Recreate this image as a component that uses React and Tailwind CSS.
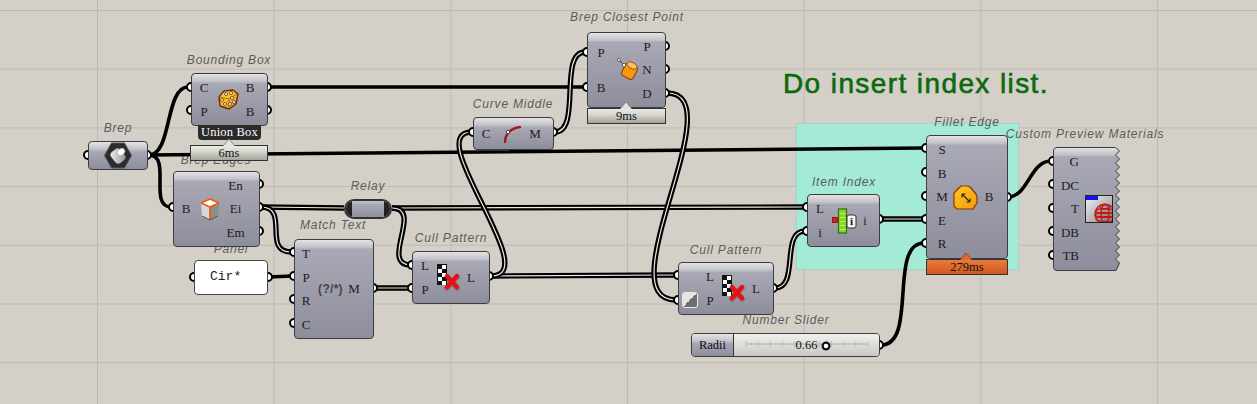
const SERIF = "font-['Liberation_Serif',serif]";
const NODE_BG =
  "bg-[linear-gradient(#e4e4e6_0,#bdbdc4_8px,#a9a8b5_9px,#8e8d9b_100%)]";
const BAR_BG = "bg-[linear-gradient(#eaeae6_0,#d6d6d0_40%,#a4a49a_100%)]";

const names = [
  ["left-[118px] top-[128px]", "Brep"],
  ["left-[229px] top-[60px]", "Bounding Box"],
  ["left-[216px] top-[160px]", "Brep Edges"],
  ["left-[368px] top-[186px]", "Relay"],
  ["left-[231px] top-[249px]", "Panel"],
  ["left-[333px] top-[225px]", "Match Text"],
  ["left-[451px] top-[238px]", "Cull Pattern"],
  ["left-[513px] top-[104px]", "Curve Middle"],
  ["left-[627px] top-[17px]", "Brep Closest Point"],
  ["left-[726px] top-[250px]", "Cull Pattern"],
  ["left-[786px] top-[320px]", "Number Slider"],
  ["left-[844px] top-[182px]", "Item Index"],
  ["left-[967px] top-[122px]", "Fillet Edge"],
  ["left-[1085px] top-[134px]", "Custom Preview Materials"],
];

// single wires
const wires = [
  "M149 155C172 155 165 87 188 87",
  "M149 155C172 155 148 207 171 207",
  "M149 155L924 148",
  "M270 87L585 87",
  "M270 277L291 276",
  "M881 345C918 345 888 243 924 243",
  "M1008 197C1028 197 1030 161 1051 161",
];

// list wires, drawn with a light core
const lists = [
  "M261 207L344 208",
  "M392 208L805 207",
  "M261 207C290 207 262 252 291 252",
  "M392 208C424 208 379 265 411 265",
  "M376 288L411 288",
  "M491 276L676 275",
  "M491 276C545 276 420 132 472 132",
  "M555 132C582 132 558 52 585 52",
  "M667 93C735 93 605 300 676 300",
  "M775 288C800 288 780 231 805 231",
  "M881 219L924 219",
];

const ports = [
  [88, 155], [147, 155],
  [191, 87], [191, 110], [267, 87], [267, 110],
  [173, 207], [259, 184], [259, 207], [259, 231],
  [194, 277], [268, 277],
  [294, 252], [294, 276], [294, 299], [294, 323], [373, 288],
  [412, 265], [412, 288], [489, 276],
  [473, 132], [553, 132],
  [587, 52], [587, 87], [665, 46], [665, 69], [665, 93],
  [678, 275], [678, 300], [773, 288],
  [879, 345],
  [807, 207], [807, 231], [879, 219],
  [926, 148], [926, 172], [926, 196], [926, 219], [926, 243], [1007, 197],
  [1053, 161], [1053, 184], [1053, 208], [1053, 231], [1053, 255],
];

const DiceIcon = () => (
  <svg width="21" height="21" viewBox="0 0 21 21" className="shrink-0">
    <defs>
      <linearGradient id="dice" x1="0" y1="0" x2="1" y2="1">
        <stop offset="0" stopColor="#ffe14a" />
        <stop offset="1" stopColor="#e88a08" />
      </linearGradient>
    </defs>
    <path d="M6 2L15 1L20 5L18 15L11 20L2 17L1 8Z" fill="url(#dice)" stroke="#6d2f08" strokeWidth="1.4" strokeLinejoin="round" />
    <path d="M2 8L11 10L19 5M11 10L11 19" fill="none" stroke="#c46a0a" strokeWidth="1" />
    {[[8, 5], [13, 4], [4, 11], [7, 15], [14, 9], [16, 13], [12, 15]].map(([x, y]) => (
      <circle key={`${x}-${y}`} cx={x} cy={y} r="1.5" fill="#fff" stroke="#5a3a10" strokeWidth="0.8" />
    ))}
  </svg>
);

const BrepIcon = () => (
  <svg width="28" height="27" viewBox="0 0 28 27" className="shrink-0">
    <defs>
      <linearGradient id="cyl" x1="0" y1="0" x2="1" y2="1">
        <stop offset="0" stopColor="#f4f4f4" />
        <stop offset="1" stopColor="#8a8a8a" />
      </linearGradient>
    </defs>
    <path d="M7.5 1H20.5L27.5 13.5L20.5 26H7.5L.5 13.5Z" fill="#2c2c2e" stroke="#555" strokeWidth="1" />
    <rect x="8" y="7" width="12" height="14" rx="4" transform="rotate(-38 14 14)" fill="url(#cyl)" />
    <ellipse cx="17.2" cy="10" rx="4" ry="3" transform="rotate(-38 17 10)" fill="#fff" stroke="#bbb" strokeWidth=".6" />
  </svg>
);

const CubeIcon = () => (
  <svg width="22" height="23" viewBox="0 0 22 23" className="shrink-0">
    <path d="M2 5L11 1L20 5L11 9Z" fill="#fff" />
    <path d="M2 5L11 9V22L3 18Z" fill="#d8d8d8" />
    <path d="M20 5L11 9V22L19 18Z" fill="#8e8e8e" />
    <path d="M2 5L11 9L20 5M11 9V22M2 5L11 1L20 5" fill="none" stroke="#ee5a08" strokeWidth="1.8" strokeLinejoin="round" />
    <path d="M3 18L11 22L19 18" fill="none" stroke="#555" strokeWidth="1" />
  </svg>
);

const CullIcon = () => (
  <svg width="24" height="27" viewBox="0 0 24 27" className="shrink-0">
    <rect x="0" y="0" width="10" height="21" fill="#111" />
    {[[5, 1], [1, 5], [5, 9], [1, 13], [5, 17]].map(([x, y]) => (
      <rect key={y} x={x} y={y} width="4" height="4" fill="#fff" />
    ))}
    <path d="M10 13L20 24M20 13L10 24" stroke="#7a1010" strokeWidth="5.5" strokeLinecap="round" opacity=".35" />
    <path d="M10 12L20 23M20 12L10 23" stroke="#e81010" strokeWidth="4.2" strokeLinecap="round" />
  </svg>
);

const ClosestIcon = () => (
  <svg width="22" height="24" viewBox="0 0 22 24" className="shrink-0">
    <path d="M2 2L7 7" stroke="#444" strokeWidth="1" />
    <rect x="6" y="6" width="13" height="14" rx="3" transform="rotate(28 12 13)" fill="#f8960e" stroke="#8a4206" strokeWidth="1" />
    <ellipse cx="15" cy="7.5" rx="5.5" ry="3" transform="rotate(28 15 7.5)" fill="#ffc062" stroke="#8a4206" strokeWidth=".8" />
    <circle cx="2" cy="2" r="1.5" fill="#fff" stroke="#444" strokeWidth=".8" />
    <circle cx="7" cy="7" r="1.7" fill="#fff" stroke="#444" strokeWidth=".8" />
  </svg>
);

const ArcIcon = () => (
  <svg width="18" height="18" viewBox="0 0 18 18" className="shrink-0">
    <path d="M2 17C2 9 8 3 17 2" fill="none" stroke="#a01a1e" strokeWidth="2.4" strokeLinecap="round" />
    <circle cx="5" cy="7" r="1.7" fill="#fff" stroke="#333" strokeWidth=".8" />
  </svg>
);

const IndexIcon = () => (
  <svg width="26" height="26" viewBox="0 0 26 26" className="shrink-0">
    <rect x="0.5" y="9.5" width="5" height="5" fill="#e01818" stroke="#7a1010" strokeWidth=".8" />
    <rect x="6.5" y="1" width="8" height="24" fill="#86d62a" stroke="#2f6e12" strokeWidth="1.2" />
    {[5, 9, 13, 17, 21].map((y) => (
      <rect key={y} x="7.5" y={y} width="6" height="1" fill="#b9ee5c" />
    ))}
    <rect x="15" y="7" width="9" height="13" rx="2" fill="#f2f2f2" stroke="#333" strokeWidth="1" />
    <text x="19.5" y="17" textAnchor="middle" fontSize="11" fontWeight="700" fontFamily="Liberation Serif" fill="#111">i</text>
  </svg>
);

const FilletIcon = () => (
  <svg width="25" height="25" viewBox="0 0 25 25" className="shrink-0">
    <defs>
      <linearGradient id="fil" x1="0" y1="0" x2="1" y2="1">
        <stop offset="0" stopColor="#ffcc1e" />
        <stop offset="1" stopColor="#f49a08" />
      </linearGradient>
    </defs>
    <path d="M8 1L14 1Q16 1 18 3L23 9Q24 11 24 13V18L20 24H4L1 21V8Z" fill="url(#fil)" stroke="#8a3208" strokeWidth="1.2" strokeLinejoin="round" />
    <path d="M9 9L17 17M9 9V12.5M9 9H12.5M17 17V13.5M17 17H13.5" fill="none" stroke="#222" strokeWidth="1.1" />
  </svg>
);

const PreviewIcon = () => (
  <svg width="28" height="28" viewBox="0 0 28 28" className="shrink-0">
    <defs>
      <linearGradient id="pv" x1="0" y1="0" x2="1" y2="1">
        <stop offset="0" stopColor="#f0f0f0" />
        <stop offset="1" stopColor="#8c8c8c" />
      </linearGradient>
      <clipPath id="pvc">
        <rect x="1" y="1" width="26" height="26" />
      </clipPath>
    </defs>
    <rect x=".5" y=".5" width="27" height="27" fill="url(#pv)" stroke="#222" />
    <rect x="1" y="1" width="12" height="4" fill="#1414f0" />
    <g clipPath="url(#pvc)" fill="none" stroke="#c01414" strokeWidth="1.2">
      <circle cx="20" cy="19" r="10" fill="#a83030" fillOpacity=".25" />
      <ellipse cx="20" cy="12" rx="5" ry="2" />
      <ellipse cx="20" cy="16" rx="9" ry="2.4" />
      <ellipse cx="20" cy="20" rx="10" ry="2.4" />
      <ellipse cx="20" cy="24" rx="9" ry="2.4" />
      <ellipse cx="20" cy="19" rx="4" ry="10" />
    </g>
  </svg>
);

const Column = ({ items, cls, row = "h-[23.5px]", text = "text-[13px]" }) => (
  <div className={`flex flex-col justify-center shrink-0 ${cls}`}>
    {items.map((t, i) => (
      <div key={i} className={`flex items-center ${row} ${text} ${SERIF} text-[#1c1c1c]`}>
        {t}
      </div>
    ))}
  </div>
);

const Node = ({ cls, children }) => (
  <div className={`absolute flex items-center rounded-[4px] border border-[#3b3b42] ${NODE_BG} ${cls}`}>
    {children}
  </div>
);

const Middle = ({ cls = "", children }) => (
  <div className={`flex-1 min-w-0 flex items-center justify-center ${cls}`}>{children}</div>
);

const Bar = ({ cls, text }) => (
  <div className={`absolute flex items-center justify-center border border-[#333] h-[16px] ${BAR_BG} ${SERIF} text-[12.5px] text-[#111] ${cls}`}>
    {text}
  </div>
);

const Pointer = ({ cls, fill = "#e2e2dc", stroke = "#777" }) => (
  <svg width="12" height="7" viewBox="0 0 12 7" className={`absolute ${cls}`}>
    <path d="M0 7L6 0L12 7" fill={fill} stroke={stroke} strokeWidth=".8" />
  </svg>
);

// right side of the Custom Preview component is a saw edge
const sawPath = () => {
  let d = "M4 .5H62.5L66.5 4";
  for (let y = 8; y < 120; y += 8) {
    d += `L62.5 ${y}L66.5 ${y + 4}`;
  }
  d += "L63 123.5H4Q.5 123.5 .5 120V4Q.5 .5 4 .5Z";
  return d;
};

const SliderTrack = () => (
  <svg width="146" height="22" viewBox="0 0 146 22" className="absolute left-0 top-0">
    <path d="M12 10H134" stroke="#aaa" strokeWidth="1" />
    {Array.from({ length: 11 }, (_, i) => (
      <path key={i} d={`M${12 + i * 12.2} 7V13`} stroke="#bbb" strokeWidth="1" />
    ))}
    <circle cx="92" cy="12" r="3.4" fill="#fff" stroke="#111" strokeWidth="2.2" />
  </svg>
);

export default function App() {
  return (
    <div className="relative w-[1257px] h-[404px] overflow-hidden bg-[#d4d0c8] bg-[linear-gradient(#bdbab2_1px,transparent_1px),linear-gradient(90deg,#bdbab2_1px,transparent_1px)] bg-[size:176.67px_58.7px] bg-[position:97px_10px]">
      <div className="absolute left-[796px] top-[123px] w-[223px] h-[147px] bg-[#a3ebd7] border border-[#9bd8c6]" />

      <div className="absolute left-[783px] top-[67px] text-[28px] leading-[34px] tracking-[1.4px] text-[#0b6a0b] font-['Liberation_Sans',sans-serif] [-webkit-text-stroke:0.6px_#0b6a0b] whitespace-nowrap">
        Do insert index list.
      </div>

      {names.map(([cls, text]) => (
        <div
          key={cls}
          className={`absolute -translate-x-1/2 -translate-y-1/2 whitespace-nowrap italic text-[12px] leading-[14px] tracking-[0.8px] text-[#5c5c5c] font-['Liberation_Sans',sans-serif] ${cls}`}
        >
          {text}
        </div>
      ))}

      <svg width="1257" height="404" viewBox="0 0 1257 404" fill="none" className="absolute left-0 top-0">
        {wires.map((d) => (
          <path key={d} d={d} stroke="#000" strokeWidth="3.6" strokeLinecap="round" />
        ))}
        {lists.map((d) => (
          <g key={d}>
            <path d={d} stroke="#000" strokeWidth="5.4" />
            <path d={d} stroke="#ecebe6" strokeWidth="1.2" />
          </g>
        ))}
        {ports.map(([x, y]) => (
          <circle key={`${x}-${y}`} cx={x} cy={y} r="4" fill="#fff" stroke="#000" strokeWidth="2" />
        ))}
      </svg>

      {/* Brep */}
      <Node cls="left-[88px] top-[141px] w-[60px] h-[29px] justify-center">
        <BrepIcon />
      </Node>

      {/* Bounding Box */}
      <Node cls="left-[191px] top-[73px] w-[77px] h-[53px]">
        <Column items={["C", "P"]} cls="w-[24px] items-center" />
        <Middle cls="pl-[7px]"><DiceIcon /></Middle>
        <Column items={["B", "B"]} cls="w-[34px] items-center" />
      </Node>
      <div className={`absolute left-[198px] top-[125px] w-[63px] h-[15px] flex items-center justify-center rounded-b-[4px] bg-[#2b2b2b] text-[12.5px] tracking-[0.2px] text-white ${SERIF}`}>
        Union Box
      </div>
      <Bar cls="left-[190px] top-[145px] w-[78px]" text="6ms" />
      <Pointer cls="left-[223px] top-[139px]" />

      {/* Brep Edges */}
      <Node cls="left-[173px] top-[171px] w-[87px] h-[76px]">
        <Column items={["B"]} cls="w-[24px] items-center" />
        <Middle cls="pl-[9px]"><CubeIcon /></Middle>
        <Column items={["En", "Ei", "Em"]} cls="w-[47px] items-center" />
      </Node>

      {/* Relay */}
      <div className="absolute left-[344px] top-[199px] w-[48px] h-[20px] flex rounded-full overflow-hidden border-2 border-[#333]">
        <div className="w-[6px] bg-[#222]" />
        <div className="flex-1 bg-[linear-gradient(#c4c4ca_0,#a9a8b5_4px,#8e8d9b_100%)]" />
        <div className="w-[6px] bg-[#222]" />
      </div>

      {/* Panel */}
      <div className="absolute left-[194px] top-[260px] w-[74px] h-[35px] rounded-[4px] border border-[#444] bg-white font-['Liberation_Mono',monospace] text-[13px] leading-[32px] pl-[15px] text-[#222]">
        Cir*
      </div>

      {/* Match Text */}
      <Node cls="left-[294px] top-[239px] w-[80px] h-[100px]">
        <Column items={["T", "P", "R", "C"]} cls="w-[22px] items-center" />
        <Middle cls="pl-[9px]">
          <span className="whitespace-nowrap font-['Liberation_Sans',sans-serif] font-bold text-[12px] tracking-[0.3px] text-[#444]">(?/*)</span>
        </Middle>
        <Column items={["M"]} cls="w-[38px] items-center" />
      </Node>

      {/* Cull Pattern */}
      <Node cls="left-[412px] top-[251px] w-[78px] h-[53px]">
        <Column items={["L", "P"]} cls="w-[24px] items-center" />
        <Middle cls="pl-[7px]"><CullIcon /></Middle>
        <Column items={["L"]} cls="w-[36px] items-center" />
      </Node>

      {/* Curve Middle */}
      <Node cls="left-[473px] top-[117px] w-[81px] h-[33px]">
        <Column items={["C"]} cls="w-[24px] items-center" />
        <Middle cls="pl-[8px]"><ArcIcon /></Middle>
        <Column items={["M"]} cls="w-[36px] items-center" />
      </Node>

      {/* Brep Closest Point */}
      <Node cls="left-[587px] top-[32px] w-[79px] h-[76px]">
        <Column items={["P", "B"]} row="h-[35px]" cls="w-[26px] items-center" />
        <Middle cls="pl-[12px]"><ClosestIcon /></Middle>
        <Column items={["P", "N", "D"]} cls="w-[36px] items-center" />
      </Node>
      <Bar cls="left-[587px] top-[108px] w-[79px]" text="9ms" />
      <Pointer cls="left-[620px] top-[102px]" />

      {/* Cull Pattern 2 */}
      <Node cls="left-[678px] top-[262px] w-[96px] h-[53px]">
        <Column items={["L", "P"]} cls="w-[44px] pl-[18px] items-center" />
        <Middle cls="pl-[5px]"><CullIcon /></Middle>
        <Column items={["L"]} cls="w-[34px] items-center" />
        <div className="absolute left-[3px] top-[29px] w-[16px] h-[16px] rounded-[3px] border border-[#e8e8e8] bg-[linear-gradient(135deg,#e4e4e4_50%,#6e6e6e_50%)]" />
      </Node>

      {/* Number Slider */}
      <div className="absolute left-[691px] top-[333px] w-[189px] h-[24px] flex rounded-[4px] border border-[#3b3b42] overflow-hidden">
        <div className={`w-[42px] flex items-center justify-center border-r border-[#333] ${NODE_BG} ${SERIF} text-[12.5px] text-[#111]`}>
          Radii
        </div>
        <div className={`relative flex-1 flex items-center justify-center bg-[linear-gradient(#f0f0ee,#c8c8c4)] ${SERIF} text-[12.5px] text-[#111]`}>
          <SliderTrack />
          <span className="relative">0.66</span>
        </div>
      </div>

      {/* Item Index */}
      <Node cls="left-[807px] top-[194px] w-[73px] h-[53px]">
        <Column items={["L", "i"]} cls="w-[24px] items-center" />
        <Middle cls="pl-[6px]"><IndexIcon /></Middle>
        <Column items={["i"]} cls="w-[28px] items-center" text="text-[12px]" />
      </Node>

      {/* Fillet Edge */}
      <Node cls="left-[926px] top-[135px] w-[82px] h-[124px]">
        <Column items={["S", "B", "M", "E", "R"]} cls="w-[30px] items-center" />
        <Middle cls="pl-[3px]"><FilletIcon /></Middle>
        <Column items={["B"]} cls="w-[36px] items-center" />
      </Node>
      <div className={`absolute left-[926px] top-[259px] w-[82px] h-[16px] flex items-center justify-center border border-[#333] bg-[linear-gradient(#e87c3c,#d2561e)] ${SERIF} text-[12.5px] text-[#111]`}>
        279ms
      </div>
      <Pointer cls="left-[960px] top-[253px]" fill="#e06a2c" stroke="#8a3a14" />

      {/* Custom Preview */}
      <div className="absolute left-[1053px] top-[147px] w-[68px] h-[124px] flex items-center">
        <svg width="68" height="124" viewBox="0 0 68 124" className="absolute left-0 top-0">
          <defs>
            <linearGradient id="cp" x1="0" y1="0" x2="0" y2="1">
              <stop offset="0" stopColor="#e4e4e6" />
              <stop offset=".065" stopColor="#bdbdc4" />
              <stop offset=".075" stopColor="#a9a8b5" />
              <stop offset="1" stopColor="#8e8d9b" />
            </linearGradient>
          </defs>
          <path d={sawPath()} fill="url(#cp)" stroke="#3b3b42" strokeWidth="1" />
        </svg>
        <div className="relative flex items-center">
          <Column items={["G", "DC", "T", "DB", "TB"]} cls="w-[26px] items-end" />
          <div className="ml-[6px]"><PreviewIcon /></div>
        </div>
      </div>
    </div>
  );
}
